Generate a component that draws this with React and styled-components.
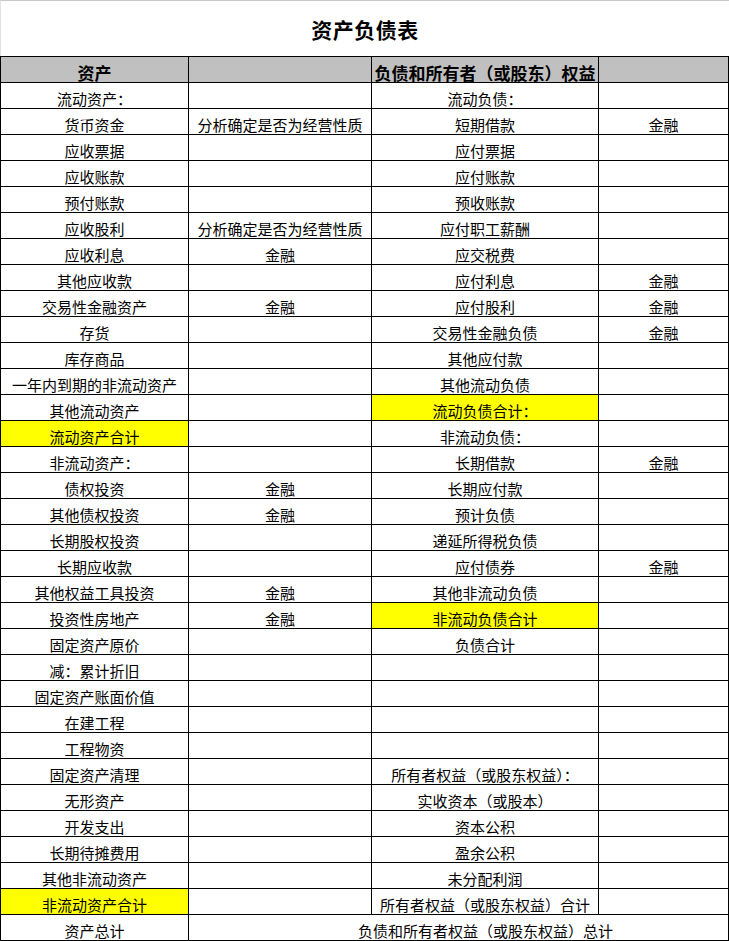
import React from 'react';
import styled, { createGlobalStyle } from 'styled-components';

const Global = createGlobalStyle`
  *, *::before, *::after { box-sizing: border-box; }
  html, body { margin: 0; padding: 0; background: #fff; }
  body { font-family: "Noto Sans CJK SC", "Noto Sans", sans-serif; color: #000; }
`;

const Page = styled.div`
  width: 729px;
  height: 941px;
  overflow: hidden;
  background: #fff;
`;

const TitleBar = styled.div`
  height: 56px;
  border-top: 1px solid #c8c8c8;
  border-left: 1px solid #e2e2e2;
  display: flex;
  align-items: center;
  justify-content: center;
  font-size: 21px;
  font-weight: 700;
  letter-spacing: 0.5px;
`;

const Sheet = styled.div`
  display: grid;
  grid-template-columns: 188px 183px 227px 130px;
  grid-auto-rows: 26px;
  border-left: 1px solid #000;
  border-top: 1px solid #000;
  width: 729px;
`;

const Cell = styled.div`
  display: flex;
  align-items: flex-end;
  justify-content: center;
  border-bottom: 1px solid #000;
  border-right: ${p => (p.$open ? 'none' : '1px solid #000')};
  background: ${p => (p.$hl ? '#ffff00' : p.$head ? '#c0c0c0' : 'transparent')};
  font-size: ${p => (p.$head ? '17px' : '15px')};
  font-weight: ${p => (p.$head ? 700 : 400)};
  line-height: ${p => (p.$head ? '18px' : '16px')};
  padding-bottom: ${p => (p.$head ? '0' : '1px')};
  white-space: nowrap;
  overflow: visible;
  min-width: 0;
`;

const CellText = styled.span`
  flex: none;
`;

const rows = [
  ['流动资产：', '', '流动负债：', ''],
  ['货币资金', '分析确定是否为经营性质', '短期借款', '金融'],
  ['应收票据', '', '应付票据', ''],
  ['应收账款', '', '应付账款', ''],
  ['预付账款', '', '预收账款', ''],
  ['应收股利', '分析确定是否为经营性质', '应付职工薪酬', ''],
  ['应收利息', '金融', '应交税费', ''],
  ['其他应收款', '', '应付利息', '金融'],
  ['交易性金融资产', '金融', '应付股利', '金融'],
  ['存货', '', '交易性金融负债', '金融'],
  ['库存商品', '', '其他应付款', ''],
  ['一年内到期的非流动资产', '', '其他流动负债', ''],
  ['其他流动资产', '', '流动负债合计：', '', 2],
  ['流动资产合计', '', '非流动负债：', '', 0],
  ['非流动资产：', '', '长期借款', '金融'],
  ['债权投资', '金融', '长期应付款', ''],
  ['其他债权投资', '金融', '预计负债', ''],
  ['长期股权投资', '', '递延所得税负债', ''],
  ['长期应收款', '', '应付债券', '金融'],
  ['其他权益工具投资', '金融', '其他非流动负债', ''],
  ['投资性房地产', '金融', '非流动负债合计', '', 2],
  ['固定资产原价', '', '负债合计', ''],
  ['减：累计折旧', '', '', ''],
  ['固定资产账面价值', '', '', ''],
  ['在建工程', '', '', ''],
  ['工程物资', '', '', ''],
  ['固定资产清理', '', '所有者权益（或股东权益）：', ''],
  ['无形资产', '', '实收资本（或股本）', ''],
  ['开发支出', '', '资本公积', ''],
  ['长期待摊费用', '', '盈余公积', ''],
  ['其他非流动资产', '', '未分配利润', ''],
  ['非流动资产合计', '', '所有者权益（或股东权益）合计', '', 0],
];

export default function App() {
  return (
    <Page>
      <Global />
      <TitleBar>资产负债表</TitleBar>
      <Sheet>
        <Cell $head>资产</Cell>
        <Cell $head />
        <Cell $head>负债和所有者（或股东）权益</Cell>
        <Cell $head />
        {rows.map((r, i) =>
          [0, 1, 2, 3].map(c => (
            <Cell key={`${i}-${c}`} $hl={r[4] === c}>
              {r[c] ? <CellText>{r[c]}</CellText> : null}
            </Cell>
          ))
        )}
        <Cell>资产总计</Cell>
        <Cell $open />
        <Cell $open>
          <CellText>负债和所有者权益（或股东权益）总计</CellText>
        </Cell>
        <Cell />
      </Sheet>
    </Page>
  );
}
